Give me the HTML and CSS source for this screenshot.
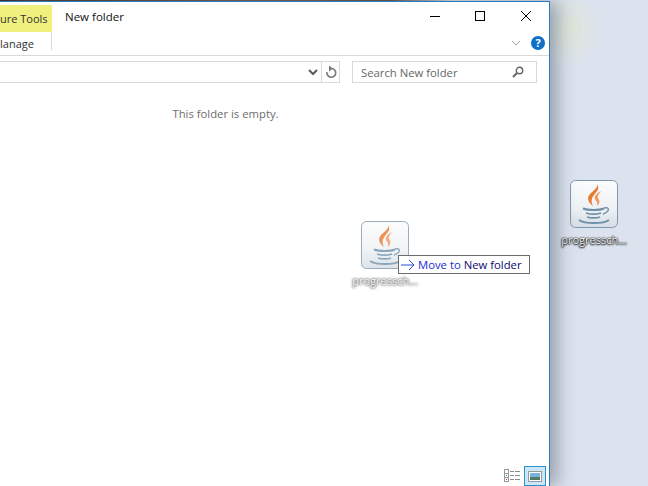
FILE: index.html
```html
<!DOCTYPE html>
<html lang="en">
<head>
  <meta charset="UTF-8">
  <title>New folder</title>
  <link rel="stylesheet" href="styles.css">
</head>
<body>
  <svg class="defs" width="0" height="0">
    <linearGradient id="tileFill" x1="0" y1="0" x2="0" y2="1">
      <stop offset="0" stop-color="#fbfcfd"/>
      <stop offset="0.6" stop-color="#eef1f4"/>
      <stop offset="1" stop-color="#d5dde5"/>
    </linearGradient>
    <symbol id="java" viewBox="0 0 48 48">
      <rect x="0.5" y="0.5" width="47" height="47" rx="5" fill="url(#tileFill)" stroke="#7e98ac"/>
      <path d="M27 4C29 9 19 12 18 18C18 21 20 24 23 26C21 22 21 19 24 15C27 11 30 9 27 4z" fill="#e8792e"/>
      <path d="M31 11C27 13 24 16 25 19C26 21 28 22 27 26C30 23 30 21 28 18C27 16 29 14 31 11z" fill="#ef9a5c"/>
      <g fill="none" stroke="#6e90ab">
        <path d="M13 28.500c5 2 16 2 21 0" stroke-width="2"/>
        <path d="M16 33c4 1.300 11 1.300 15 0" stroke-width="1.800"/>
        <path d="M17 37c3 1.200 10 1.200 13 0" stroke-width="1.800"/>
        <path d="M34 28c6-1.500 6 3.500-1 6" stroke-width="1.400"/>
        <path d="M9 40c6 4 24 4 30 0" stroke-width="2"/>
      </g>
    </symbol>
  </svg>

  <div class="top-strip"></div>
  <div class="screen">
    <div class="window">
      <div class="titlebar">
        <div class="tools">
          <div class="tools-head">ure Tools</div>
          <div class="tools-tab">lanage</div>
        </div>
        <div class="title">New folder</div>
        <div class="title-right">
          <div class="caption">
            <svg width="102" height="16" viewBox="0 0 102 16">
              <path d="M0 8.500h10" stroke="#000" fill="none"/>
              <rect x="45.500" y="3.500" width="9" height="9" stroke="#000" fill="none"/>
              <path d="M91 3l10 10M101 3l-10 10" stroke="#000" fill="none"/>
            </svg>
          </div>
          <div class="ribbon-btns">
            <svg width="10" height="6" viewBox="0 0 10 6"><path d="M1 1l4 4 4-4" stroke="#a6a6a6" fill="none"/></svg>
            <span class="help">?</span>
          </div>
        </div>
      </div>
      <div class="addressrow">
        <div class="addressbar">
          <span class="addr-space"></span>
          <span class="addr-btn"><svg width="10" height="7" viewBox="0 0 10 7"><path d="M1 1l4 4 4-4" stroke="#5a5a5a" stroke-width="2" fill="none"/></svg></span>
          <span class="addr-btn addr-refresh"><svg width="12" height="14" viewBox="0 0 12 14"><path d="M7 3.500a4.400 4.400 0 1 1-5 3.500" stroke="#777" stroke-width="1.600" fill="none"/><path d="M4 0.500v6l4-3z" fill="#777"/></svg></span>
        </div>
        <div class="searchbox">
          <span>Search New folder</span>
          <svg width="12" height="12" viewBox="0 0 12 12"><circle cx="7.500" cy="4.500" r="3.200" stroke="#666" stroke-width="1.400" fill="none"/><path d="M5 7l-4 4" stroke="#666" stroke-width="2"/></svg>
        </div>
      </div>
      <div class="content">
        <p class="empty">This folder is empty.</p>
        <div class="ghost">
          <svg class="tile" width="48" height="48"><use href="#java"/></svg>
          <div class="ghost-label">progressch...</div>
        </div>
        <div class="tooltip">
          <svg width="14" height="12" viewBox="0 0 14 12"><path d="M0 6h13M8 1l5 5-5 5" stroke="#2a4fd0" fill="none"/></svg>
          <span>Move to <b>New folder</b></span>
        </div>
      </div>
      <div class="statusbar">
        <svg width="17" height="14" viewBox="0 0 17 14">
          <rect x="0.500" y="0.500" width="4" height="4" fill="#fff" stroke="#999"/>
          <rect x="0.500" y="4.500" width="4" height="4" fill="#fff" stroke="#999"/>
          <rect x="0.500" y="8.500" width="4" height="4" fill="#fff" stroke="#999"/>
          <rect x="2" y="6" width="1" height="1" fill="#3a8fd8"/>
          <rect x="2" y="10" width="1" height="1" fill="#c43c3c"/>
          <path d="M6 2.500h4M11 2.500h5M6 6.500h4M11 6.500h5M6 10.500h4M11 10.500h5" stroke="#8a8a8a" fill="none"/>
        </svg>
        <span class="view-active">
          <svg width="14" height="11" viewBox="0 0 14 11">
            <rect x="0.500" y="0.500" width="13" height="10" fill="#fff" stroke="#9a9a9a"/>
            <rect x="2" y="2" width="10" height="4" fill="#7ab2e0"/>
            <rect x="2" y="6" width="10" height="3" fill="#4f7a68"/>
          </svg>
        </span>
      </div>
    </div>
    <div class="desktop">
      <div class="desk-icon">
        <svg class="tile" width="48" height="48"><use href="#java"/></svg>
        <div class="desk-label">progressch...</div>
      </div>
    </div>
  </div>
</body>
</html>
```

FILE: styles.css
```css
html, body {
  margin: 0;
  padding: 0;
  height: 100%;
  overflow: hidden;
  font-family: "Open Sans", sans-serif;
  font-size: 11px;
  color: #222;
  background: #dde3ee;
}
.defs {
  position: absolute;
}
.top-strip {
  height: 1px;
  background: linear-gradient(to right, #3a2a22, #7a5a48 40%, #5c4a40 60%, #dde3ee 70%);
}
.screen {
  display: flex;
  height: 485px;
}

/* window */
.window {
  width: 549px;
  flex: none;
  display: flex;
  flex-direction: column;
  background: #fff;
  border-top: 1px solid #2b7bbd;
  border-right: 1px solid #2b7bbd;
  box-shadow: 8px 0 16px rgba(90, 100, 120, 0.5);
  position: relative;
  z-index: 1;
}
.titlebar {
  height: 53px;
  display: flex;
  border-bottom: 1px solid #d9d9d9;
}
.tools {
  width: 52px;
  padding-top: 3px;
  flex: none;
}
.tools-head {
  height: 27px;
  line-height: 27px;
  background: #f0f07e;
  white-space: nowrap;
  text-align: right;
  padding-right: 8px;
  color: #333;
}
.tools-tab {
  height: 18px;
  line-height: 24px;
  border-right: 1px solid #d9d9d9;
  color: #333;
}
.title {
  flex: 1;
  padding: 7px 0 0 13px;
  font-size: 11.500px;
  color: #111;
}
.title-right {
  width: 140px;
  display: flex;
  flex-direction: column;
  align-items: flex-end;
}
.caption {
  height: 30px;
  margin-top: 6px;
  width: 119px;
}
.caption svg {
  display: block;
}
.ribbon-btns {
  display: flex;
  align-items: center;
  gap: 10px;
  padding-right: 4px;
  margin-top: -2px;
}
.help {
  width: 14px;
  height: 14px;
  border-radius: 50%;
  background: #0f6fc6;
  color: #fff;
  font-weight: bold;
  font-size: 11px;
  line-height: 14px;
  text-align: center;
}
.addressrow {
  display: flex;
  height: 22px;
  padding: 6px 12px 5px 0;
  gap: 12px;
  margin-top: -1px;
}
.addressbar {
  width: 340px;
  display: flex;
  box-sizing: border-box;
  border: 1px solid #d9d9d9;
  border-left: none;
}
.addr-space {
  flex: 1;
}
.addr-btn {
  width: 17px;
  display: flex;
  align-items: center;
  justify-content: center;
}
.addr-refresh {
  border-left: 1px solid #d9d9d9;
}
.searchbox {
  flex: 1;
  display: flex;
  align-items: center;
  justify-content: space-between;
  padding: 0 12px 0 8px;
  border: 1px solid #d9d9d9;
  color: #666;
  font-size: 11.300px;
}
.content {
  flex: 1;
  position: relative;
}
.empty {
  margin: 0;
  padding: 18px 98px 0 0;
  text-align: center;
  font-size: 11.300px;
  color: #6d6d6d;
}

/* drag ghost over the list */
.ghost {
  position: absolute;
  left: 346px;
  top: 133px;
  width: 78px;
  text-align: center;
  opacity: 0.8;
}
.tile {
  display: block;
  margin: 0 auto;
}
.ghost-label {
  margin-top: 4px;
  color: #eee;
  text-shadow: 0 0 2px #333, 0 0 3px #333;
}
.tooltip {
  position: absolute;
  left: 398px;
  top: 167px;
  height: 19px;
  width: 132px;
  display: flex;
  align-items: center;
  gap: 3px;
  padding-left: 2px;
  box-sizing: border-box;
  background: #fff;
  border: 1px solid #6b6b6b;
  font-size: 11.300px;
  color: #1a2bd8;
}
.tooltip b {
  font-weight: normal;
  color: #0a0a70;
}
.statusbar {
  height: 20px;
  display: flex;
  justify-content: flex-end;
  align-items: center;
  gap: 3px;
  padding: 0 3px 0 0;
}
.view-active {
  width: 22px;
  height: 20px;
  display: flex;
  align-items: center;
  justify-content: center;
  background: #cde6f7;
  border: 1px solid #2b92d0;
  box-sizing: border-box;
}

/* desktop */
.desktop {
  flex: 1;
  background:
    radial-gradient(ellipse 34px 40px at 18px 28px, rgba(222, 232, 190, 0.45), transparent),
    #dde3ee;
  padding: 179px 0 0 5px;
}
.desk-icon {
  width: 78px;
  text-align: center;
}
.desk-label {
  margin-top: 4px;
  color: #fff;
  text-shadow: 0 0 1px #000, 0 0 2px #000, 0 1px 2px #000;
  white-space: nowrap;
}
```
